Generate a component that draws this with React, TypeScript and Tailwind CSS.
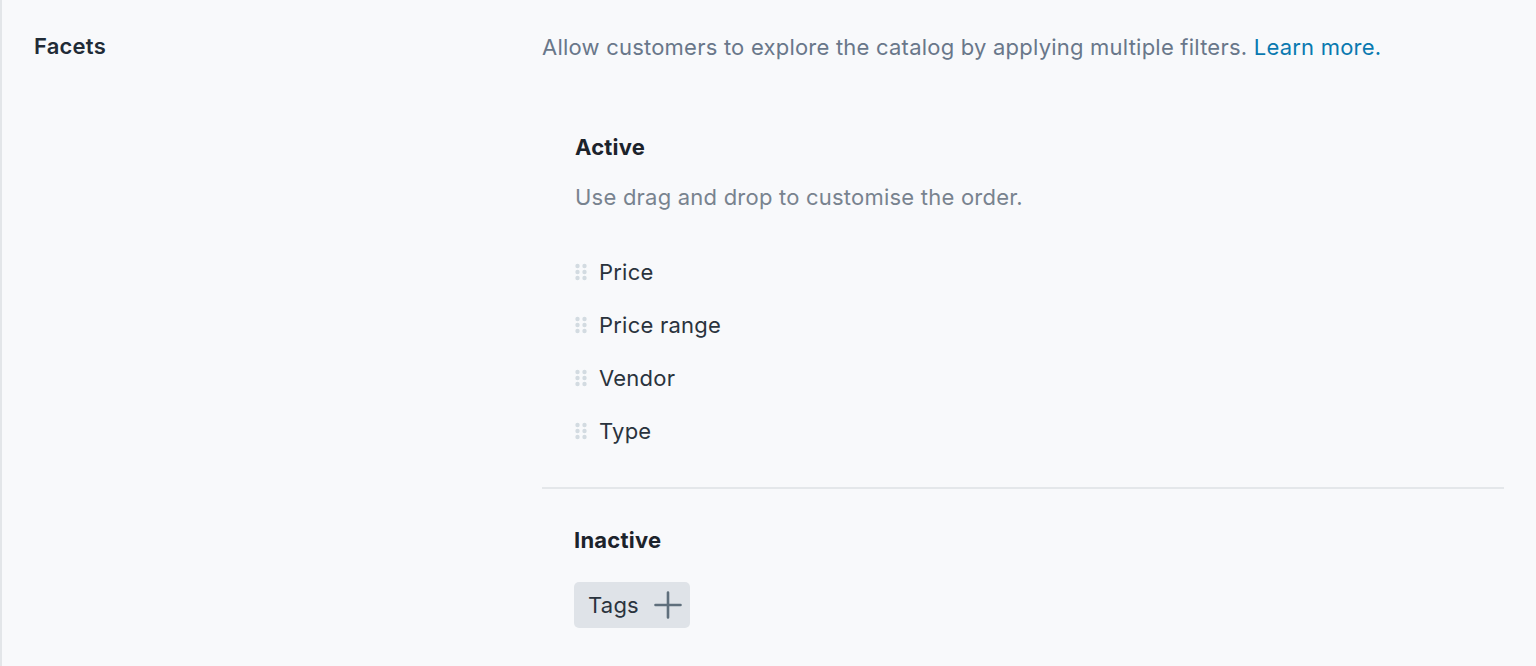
import React from "react";

function Handle() {
  return (
    <svg width="12" height="18" viewBox="0 0 12 18" className="shrink-0">
      {[0, 1, 2].map((r) =>
        [0, 1].map((c) => (
          <circle key={`${r}-${c}`} cx={2.5 + c * 7} cy={3 + r * 6} r={2.2} fill="#d3dbe1" />
        ))
      )}
    </svg>
  );
}

export default function App() {
  const items = ["Price", "Price range", "Vendor", "Type"];
  return (
    <div
      className="w-full h-[666px] bg-[#f8f9fb] border-l-2 border-[#e3e6e9] flex text-[#212b36] overflow-hidden tracking-[0.22px]"
      style={{ fontFamily: "Inter, 'Noto Sans', sans-serif" }}
    >
      <div className="w-[540px] shrink-0 pl-[32px] pt-[34px]">
        <div className="text-[22px] leading-[24px] font-semibold">Facets</div>
      </div>
      <div className="w-[962px] shrink-0 pt-[35px]">
        <p className="text-[22px] leading-[24px] text-[#69778a]">
          Allow customers to explore the catalog by applying multiple filters.{" "}
          <span className="text-[#0a79b0]">Learn more.</span>
        </p>
        <div className="pl-[33px] mt-[76px]">
          <div className="text-[22px] leading-[24px] font-bold text-[#1c232b]">Active</div>
          <div className="mt-[26px] text-[22px] leading-[24px] text-[#78838f]">
            Use drag and drop to customise the order.
          </div>
          <div className="mt-[36px] flex flex-col">
            {items.map((it) => (
              <div key={it} className="h-[53px] flex items-center gap-[12px]">
                <Handle />
                <span className="text-[22px] leading-[24px] text-[#2a333d]">{it}</span>
              </div>
            ))}
          </div>
        </div>
        <div className="mt-[30px] h-[2px] bg-[#e4e7ea]" />
        <div className="pl-[32px] mt-[39px]">
          <div className="text-[22px] leading-[24px] font-bold text-[#1c232b]">Inactive</div>
          <div className="mt-[30px] inline-flex items-center h-[46px] w-[116px] pl-[14px] rounded-[5px] bg-[#dfe3e8] gap-[15px]">
            <span className="text-[22px] leading-[24px] text-[#2a333d]">Tags</span>
            <svg width="28" height="28" viewBox="0 0 28 28">
              <path d="M14 1.5V26.5M1.5 14H26.5" stroke="#5f6f7c" strokeWidth="2.6" strokeLinecap="round" />
            </svg>
          </div>
        </div>
      </div>
    </div>
  );
}
